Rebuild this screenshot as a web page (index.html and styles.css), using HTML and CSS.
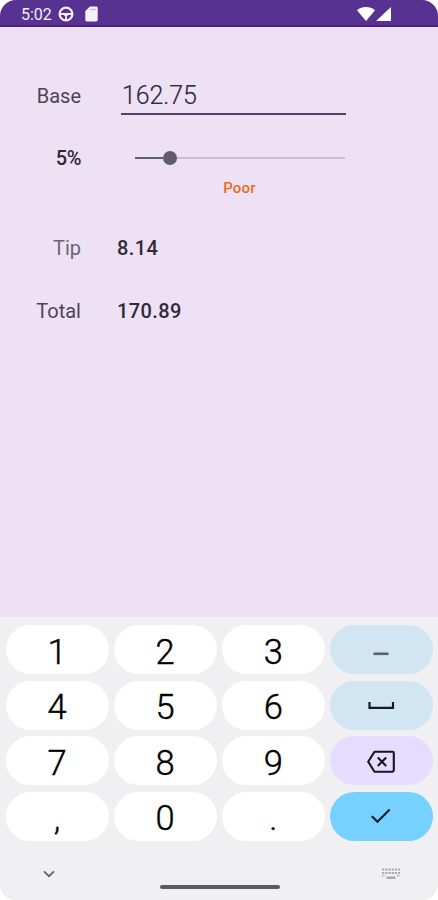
FILE: index.html
```html
<!DOCTYPE html>
<html lang="en">
<head>
  <meta charset="UTF-8">
  <meta name="viewport" content="width=device-width, initial-scale=1">
  <title>Tippy</title>
  <link rel="stylesheet" href="styles.css">
</head>
<body>
  <div class="phone">
    <!-- Status bar -->
    <header class="status-bar">
      <span class="clock">5:02</span>
      <svg class="icon-wheel" width="16" height="16" viewBox="0 0 16 16">
        <circle cx="8" cy="8" r="6.4" fill="none" stroke="#f3eefa" stroke-width="2.2"/>
        <path d="M2 8h12M8 8v6" stroke="#f3eefa" stroke-width="1.8"/>
        <path d="M5 7h6l-1.500 3h-3z" fill="#f3eefa"/>
      </svg>
      <svg class="icon-card" width="13" height="16" viewBox="0 0 13 16">
        <path fill="#f6f2fa" d="M5 .5h6.3c.8 0 1.4.6 1.4 1.4v12.2c0 .8-.6 1.4-1.4 1.4H1.700c-.8 0-1.400-.6-1.400-1.400V5z"/>
        <path d="M5 3.500h6" stroke="#c9bddd" stroke-width="1.400"/>
      </svg>
      <svg class="icon-signal" width="35" height="16" viewBox="0 0 35 16">
        <path fill="#fff" d="M0 4.300C4.800-.1 13.200-.1 18 4.300L9 15z"/>
        <path fill="#fff" d="M34 1v14H19z"/>
      </svg>
    </header>

    <!-- Tip form -->
    <main class="form">
      <div class="row row-base">
        <label class="label">Base</label>
        <div class="amount">162.75</div>
      </div>
      <div class="row row-percent">
        <span class="label strong">5%</span>
        <div class="slider">
          <div class="slider-fill"></div>
          <div class="slider-thumb"></div>
          <div class="slider-track"></div>
        </div>
      </div>
      <div class="rating">Poor</div>
      <div class="row row-tip">
        <span class="label light">Tip</span>
        <span class="value">8.14</span>
      </div>
      <div class="row row-total">
        <span class="label">Total</span>
        <span class="value">170.89</span>
      </div>
    </main>

    <!-- Numeric keyboard -->
    <section class="keyboard">
      <div class="keys">
        <div class="key">1</div>
        <div class="key">2</div>
        <div class="key">3</div>
        <div class="key key-blue">
          <svg width="28" height="24" viewBox="0 0 28 24"><path d="M6.500 15.800h15" stroke="#52636f" stroke-width="2.600"/></svg>
        </div>
        <div class="key">4</div>
        <div class="key">5</div>
        <div class="key">6</div>
        <div class="key key-blue">
          <svg width="28" height="24" viewBox="0 0 28 24"><path d="M2.500 9v5.800h23.500V9" fill="none" stroke="#131c22" stroke-width="2.200"/></svg>
        </div>
        <div class="key">7</div>
        <div class="key">8</div>
        <div class="key">9</div>
        <div class="key key-lilac">
          <svg width="28" height="24" viewBox="0 0 28 24" fill="none" stroke="#17151f" stroke-width="2.100">
            <path d="M7.500 2.700h17.900q1.400 0 1.400 1.400v17.200q0 1.400-1.400 1.400H7.500L1.200 12.700z" stroke-linejoin="round"/>
            <path d="M10.800 8.500l8.400 8.400M19.200 8.500l-8.400 8.400"/>
          </svg>
        </div>
        <div class="key"><span class="mark">,</span></div>
        <div class="key">0</div>
        <div class="key"><span class="mark">.</span></div>
        <div class="key key-enter">
          <svg width="28" height="24" viewBox="0 0 28 24"><path d="M4.800 12.200l5.700 5.600L22.700 5.500" fill="none" stroke="#10202a" stroke-width="2.200"/></svg>
        </div>
      </div>

      <!-- Navigation bar -->
      <div class="nav">
        <svg width="12" height="8" viewBox="0 0 12 8"><path d="M1 1.300l5 4.900 5-4.900" fill="none" stroke="#626264" stroke-width="1.700"/></svg>
        <div class="home-bar"></div>
        <svg width="18" height="12" viewBox="0 0 18 12" fill="none" stroke="#a9a9ac">
          <path d="M0 1.500h18M0 5h18" stroke-width="2.200" stroke-dasharray="2.200 1"/>
          <path d="M0 7.800h3M15 7.800h3" stroke-width="1.500" stroke-dasharray="1.500 1"/>
          <path d="M4.500 9.700h9" stroke-width="2.400"/>
        </svg>
      </div>
    </section>
  </div>
</body>
</html>
```
FILE: styles.css
```css
* {
  box-sizing: border-box;
}

body {
  margin: 0;
  background: #fff;
  font-family: Roboto, "Liberation Sans", sans-serif;
  color: #302a3a;
}

.phone {
  display: flex;
  flex-direction: column;
  width: 438px;
  height: 900px;
  border-radius: 16px;
  overflow: hidden;
  background: #eee1f4;
}

/* Status bar */
.status-bar {
  display: flex;
  align-items: center;
  height: 27px;
  padding: 2px 46px 0 21px;
  background: #573290;
  border-bottom: 2px solid #482080;
}

.clock {
  width: 37px;
  padding-top: 1px;
  color: #f3eefa;
  font-size: 16px;
}

.icon-card {
  margin-left: 11px;
}

.icon-signal {
  margin-left: auto;
}

/* Form */
.form {
  flex: 1;
  padding-top: 46px;
}

.row {
  display: flex;
  align-items: center;
}

.label {
  width: 81px;
  text-align: right;
  font-size: 20px;
  color: #4c4556;
}

.label.strong {
  font-weight: 500;
  letter-spacing: -0.4px;
  color: #2d2737;
}

.label.light {
  color: #6b6376;
}

.row-base {
  height: 42px;
  padding-top: 3px;
}

.amount {
  width: 225px;
  height: 39px;
  margin-left: 40px;
  padding-left: 1px;
  border-bottom: 2px solid #51465f;
  font-size: 25px;
  font-weight: 300;
  line-height: 39px;
  letter-spacing: -0.1px;
  -webkit-text-stroke: 0.2px #302a3a;
}

.row-percent {
  height: 32px;
  margin-top: 27px;
}

.slider {
  display: flex;
  align-items: center;
  width: 210px;
  margin-left: 54px;
}

.slider-fill {
  width: 28px;
  height: 2px;
  background: #625b6e;
}

.slider-thumb {
  width: 14px;
  height: 14px;
  border-radius: 50%;
  background: #625b6e;
}

.slider-track {
  flex: 1;
  height: 2px;
  background: #cabfd0;
}

.rating {
  width: 225px;
  margin-top: 4px;
  margin-left: 127px;
  text-align: center;
  font-size: 15px;
  font-weight: 500;
  line-height: 20px;
  letter-spacing: 0.2px;
  color: #e66d23;
}

.row-tip,
.row-total {
  height: 32px;
}

.row-tip {
  margin-top: 34px;
}

.row-total {
  margin-top: 31px;
}

.value {
  margin-left: 36px;
  font-size: 20px;
  font-weight: 500;
  letter-spacing: 0.4px;
}

/* Keyboard */
.keyboard {
  height: 283px;
  padding: 8px 5px 0 5.5px;
  background: #f0f0f2;
}

.keys {
  display: grid;
  grid-template-columns: repeat(4, 1fr);
  grid-auto-rows: 49px;
  gap: 6.5px 5px;
}

.key {
  display: flex;
  align-items: center;
  justify-content: center;
  padding-top: 4px;
  border-radius: 25px;
  background: #fff;
  color: #000;
  font-size: 34.5px;
  font-weight: 300;
  -webkit-text-stroke: 0.4px #000;
}

.key svg {
  margin-top: -4px;
}

.key-blue {
  background: #d1e5f3;
}

.key-lilac {
  background: #e4ddfd;
}

.key-enter {
  background: #76d1ff;
}

.mark {
  font-size: 34px;
}

/* Navigation bar */
.nav {
  display: flex;
  align-items: center;
  justify-content: space-between;
  height: 60px;
  padding: 7px 33px 0 37px;
}

.home-bar {
  width: 120px;
  height: 4px;
  margin-top: 26px;
  margin-left: 4px;
  border-radius: 2px;
  background: #5b5b5d;
}
```
